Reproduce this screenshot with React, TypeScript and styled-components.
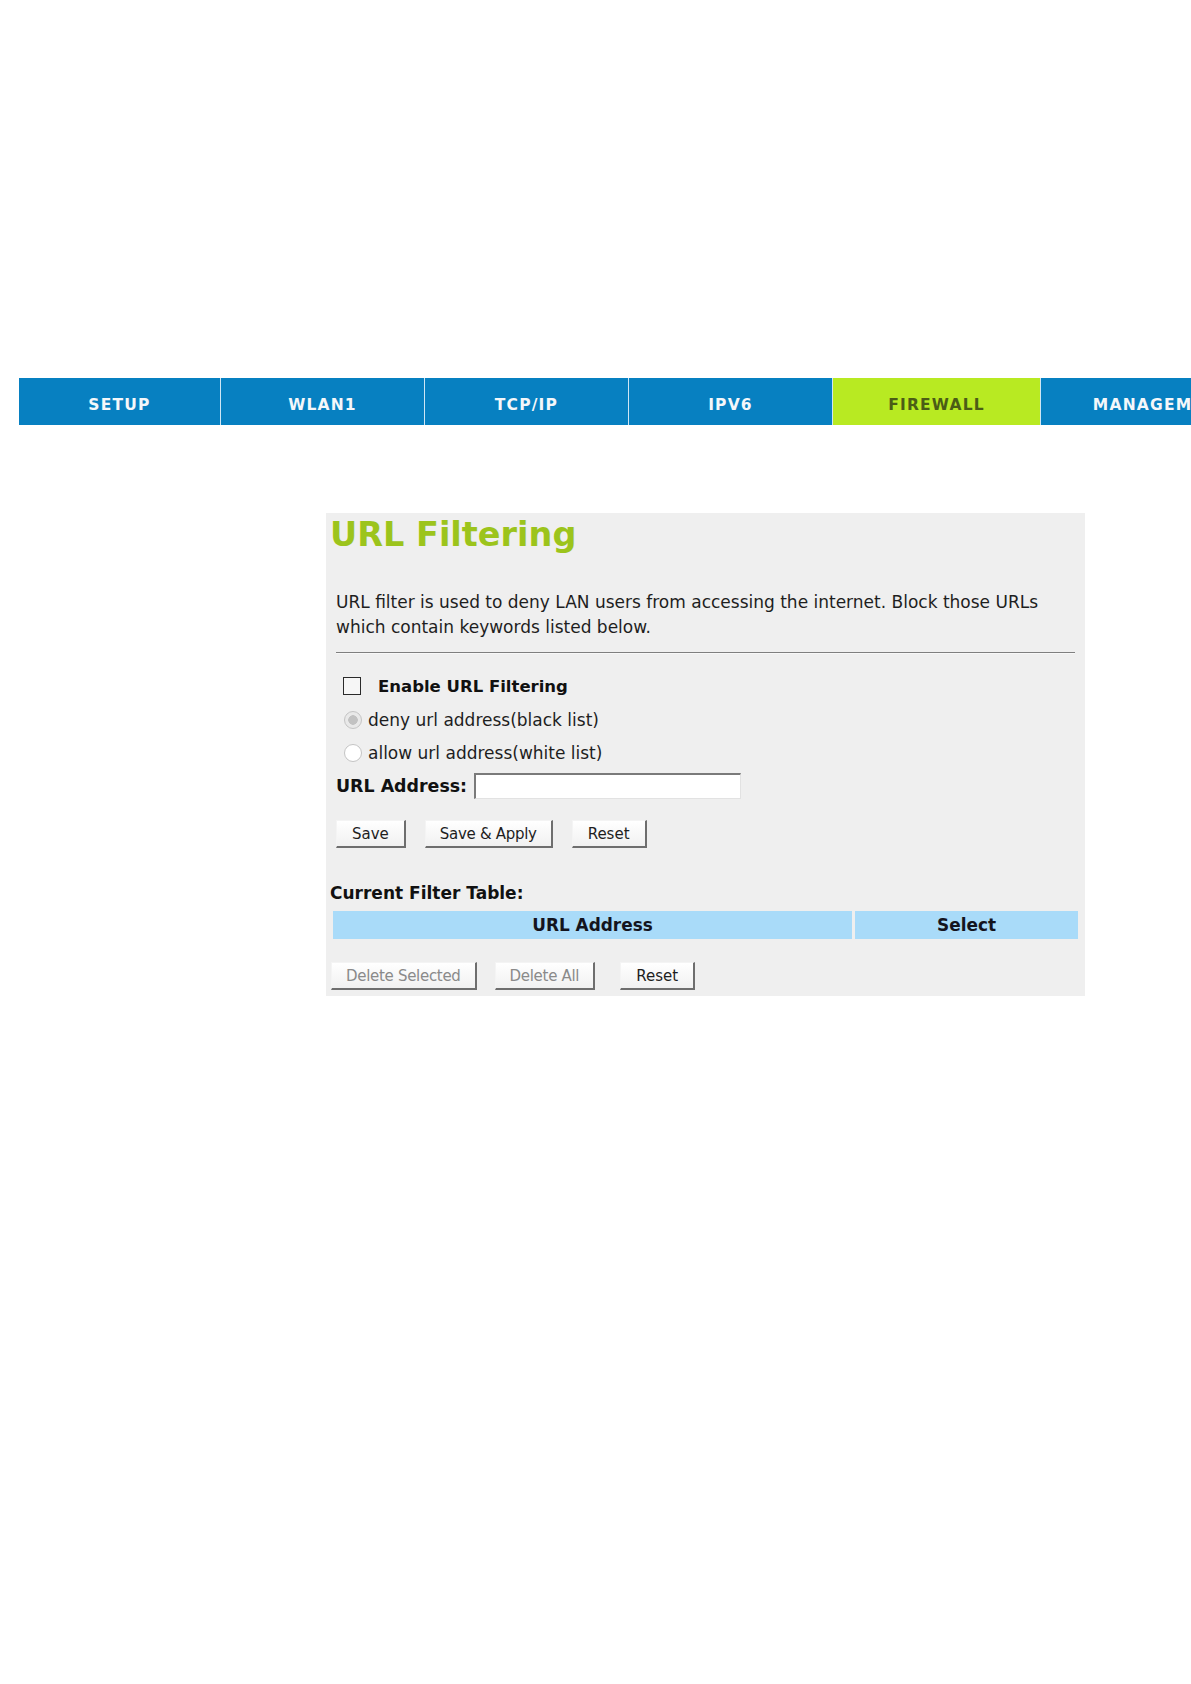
import React from "react";
import styled, { createGlobalStyle } from "styled-components";

const GlobalStyle = createGlobalStyle`
  html, body {
    margin: 0;
    padding: 0;
    background: #ffffff;
    overflow: hidden;
  }
  body {
    font-family: "DejaVu Sans", Verdana, sans-serif;
    color: #1c1c1c;
  }
`;

const Page = styled.div`
  width: 1191px;
  min-height: 1684px;
  padding-top: 378px;
  box-sizing: border-box;
  overflow: hidden;
`;

const Nav = styled.nav`
  display: flex;
  gap: 1px;
  margin-left: 19px;
  width: max-content;
  height: 47px;
  background: #cfe6f5;
`;

const Tab = styled.div<{ $w: number; $active?: boolean }>`
  width: ${(p) => p.$w}px;
  flex: none;
  display: flex;
  align-items: center;
  justify-content: center;
  padding-top: 6px;
  box-sizing: border-box;
  background: ${(p) => (p.$active ? "#b8ea22" : "#0780c1")};
  color: ${(p) => (p.$active ? "#4b5c16" : "#f4f7fa")};
  font-family: "DejaVu Sans", Verdana, sans-serif;
  font-weight: bold;
  font-size: 15.5px;
  letter-spacing: 1.2px;
  white-space: nowrap;
`;

const Panel = styled.section`
  margin: 88px 0 0 326px;
  width: 759px;
  background: #efefef;
  padding: 3px 0 6px;
  box-sizing: border-box;
`;

const Title = styled.h1`
  margin: 0 0 0 4px;
  font-size: 33.5px;
  line-height: 38px;
  font-weight: bold;
  color: #9cc41c;
`;

const Description = styled.p`
  margin: 36px 10px 0;
  font-size: 17px;
  line-height: 25px;
  color: #1e1e1e;
`;

const Divider = styled.hr`
  margin: 12px 10px 0;
  border: none;
  border-top: 1px solid #7f7f7f;
  border-bottom: 1px solid #f8f8f8;
  height: 0;
`;

const Form = styled.div`
  margin-top: 15px;
  padding-left: 10px;
  display: flex;
  flex-direction: column;
`;

const Row = styled.label<{ $gap?: number; $indent?: number; $h?: number }>`
  display: flex;
  align-items: center;
  height: ${(p) => p.$h ?? 34}px;
  gap: ${(p) => p.$gap ?? 6}px;
  padding-left: ${(p) => p.$indent ?? 0}px;
  font-size: 17px;
  color: #1e1e1e;
  white-space: nowrap;
`;

const BoldText = styled.span<{ $size?: number }>`
  font-weight: bold;
  font-size: ${(p) => p.$size ?? 16.5}px;
  color: #111;
`;

const Checkbox = styled.input.attrs({ type: "checkbox" })`
  appearance: none;
  margin: 0;
  width: 18px;
  height: 18px;
  border: 1px solid #2a2a2a;
  background: #f6f6f6;
  box-sizing: border-box;
`;

const Radio = styled.input.attrs({ type: "radio" })`
  appearance: none;
  margin: 0;
  width: 18px;
  height: 18px;
  border-radius: 50%;
  border: 1px solid #c4c4c4;
  background: #ffffff;
  box-sizing: border-box;
  &:checked {
    background: radial-gradient(circle, #c2c2c2 0 4.5px, #e9e9e9 5px);
  }
`;

const TextInput = styled.input.attrs({ type: "text" })`
  width: 267px;
  height: 26px;
  margin: 0;
  box-sizing: border-box;
  border: none;
  border-top: 2px solid #7a7a7a;
  border-left: 2px solid #7a7a7a;
  border-right: 1px solid #e2e2e2;
  border-bottom: 1px solid #e2e2e2;
  background: #ffffff;
`;

const ButtonRow = styled.div<{ $top: number; $indent: number; $gap?: number }>`
  display: flex;
  gap: ${(p) => p.$gap ?? 19}px;
  margin-top: ${(p) => p.$top}px;
  padding-left: ${(p) => p.$indent}px;
`;

const Button = styled.button<{ $extra?: number; $compact?: boolean }>`
  height: 28px;
  padding: 0 ${(p) => (p.$compact ? 14 : 15)}px;
  margin: 0 0 0 ${(p) => p.$extra ?? 0}px;
  font-family: "DejaVu Sans", Verdana, sans-serif;
  font-size: 15px;
  letter-spacing: ${(p) => (p.$compact ? -0.3 : 0)}px;
  color: #1e1e1e;
  background: linear-gradient(#ffffff, #f1f1f1);
  border: none;
  border-top: 1px solid #f4f4f4;
  border-left: 1px solid #f4f4f4;
  border-right: 2px solid #6e6e6e;
  border-bottom: 2px solid #6e6e6e;
  box-sizing: border-box;
  &:disabled {
    color: #8a8a8a;
  }
`;

const TableLabel = styled.h2`
  margin: 33px 0 0 4px;
  font-size: 17px;
  line-height: 24px;
  font-weight: bold;
  color: #111;
`;

const HeaderRow = styled.div`
  display: grid;
  grid-template-columns: 519px 1fr;
  gap: 3px;
  margin: 6px 7px 0;
  height: 28px;
`;

const HeaderCell = styled.div`
  display: flex;
  align-items: center;
  justify-content: center;
  background: #a9dbf9;
  font-weight: bold;
  font-size: 16.9px;
  color: #14141e;
`;

const tabs = [
  { label: "SETUP", w: 201 },
  { label: "WLAN1", w: 203 },
  { label: "TCP/IP", w: 203 },
  { label: "IPV6", w: 203 },
  { label: "FIREWALL", w: 207, active: true },
  { label: "MANAGEMENT", w: 241 },
];

export default function App() {
  return (
    <>
      <GlobalStyle />
      <Page>
        <Nav>
          {tabs.map((t) => (
            <Tab key={t.label} $w={t.w} $active={t.active}>
              {t.label}
            </Tab>
          ))}
        </Nav>
        <Panel>
          <Title>URL Filtering</Title>
          <Description>
            URL filter is used to deny LAN users from accessing the internet. Block those URLs
            <br />
            which contain keywords listed below.
          </Description>
          <Divider />
          <Form>
            <Row $gap={17} $indent={7}>
              <Checkbox />
              <BoldText>Enable URL Filtering</BoldText>
            </Row>
            <Row $indent={8}>
              <Radio name="mode" defaultChecked disabled />
              <span>deny url address(black list)</span>
            </Row>
            <Row $indent={8} $h={32}>
              <Radio name="mode" disabled />
              <span>allow url address(white list)</span>
            </Row>
            <Row $gap={7}>
              <BoldText $size={17.4}>URL Address:</BoldText>
              <TextInput />
            </Row>
          </Form>
          <ButtonRow $top={17} $indent={10}>
            <Button>Save</Button>
            <Button $compact>Save &amp; Apply</Button>
            <Button>Reset</Button>
          </ButtonRow>
          <TableLabel>Current Filter Table:</TableLabel>
          <HeaderRow>
            <HeaderCell>URL Address</HeaderCell>
            <HeaderCell>Select</HeaderCell>
          </HeaderRow>
          <ButtonRow $top={23} $indent={5} $gap={18}>
            <Button disabled $compact>Delete Selected</Button>
            <Button disabled $compact>Delete All</Button>
            <Button $extra={7}>Reset</Button>
          </ButtonRow>
        </Panel>
      </Page>
    </>
  );
}
